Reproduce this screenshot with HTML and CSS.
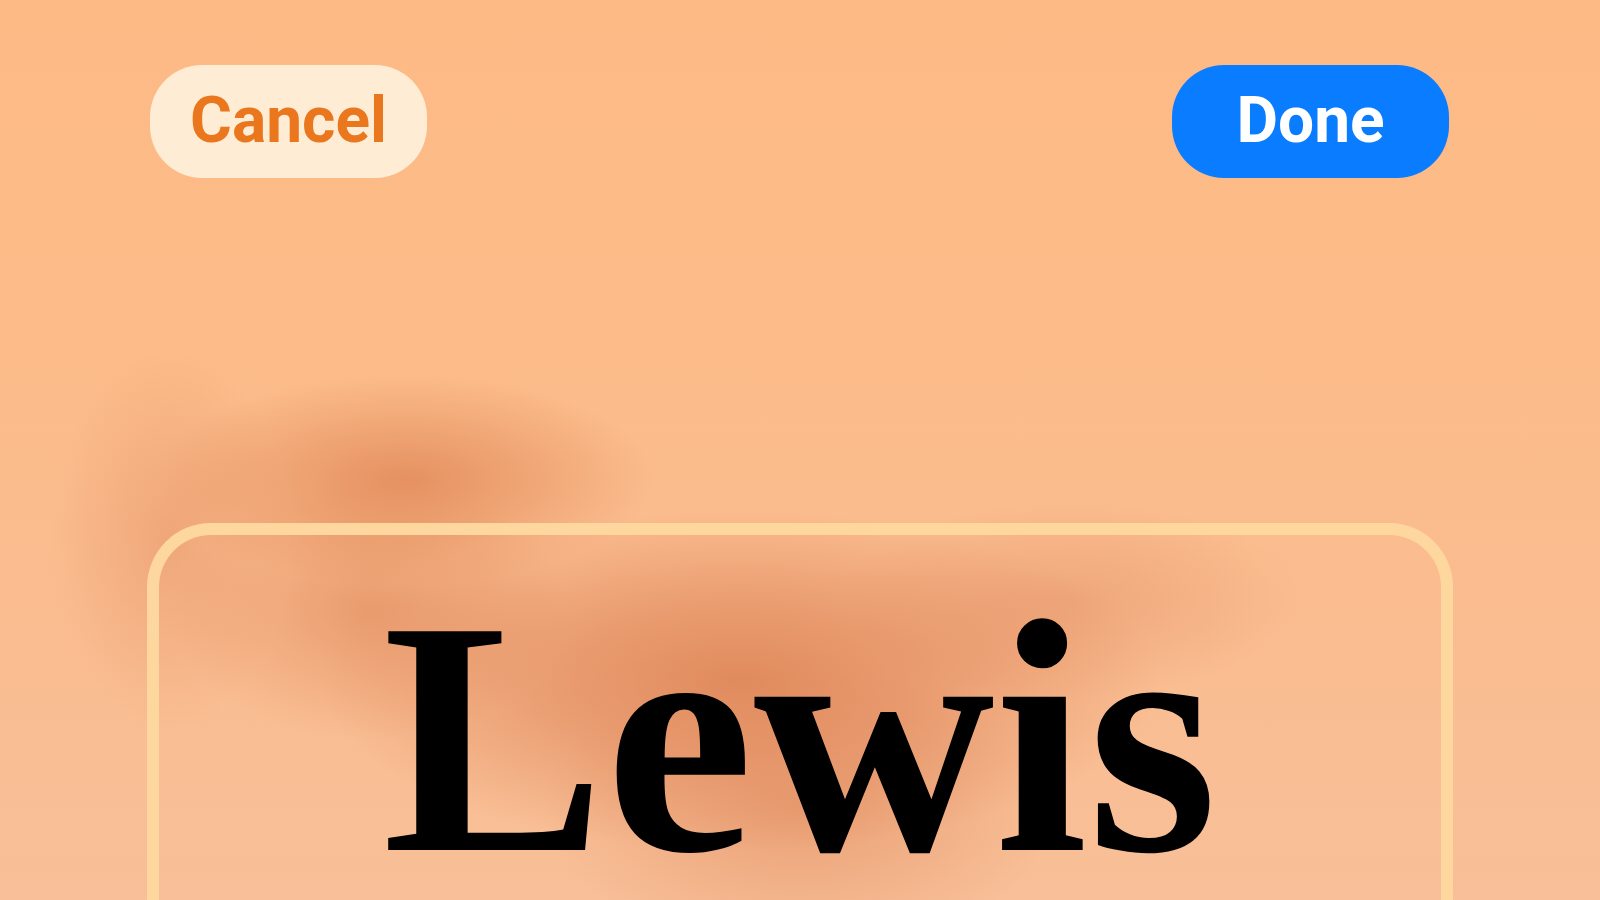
FILE: index.html
```html
<!DOCTYPE html>
<html lang="en">
<head>
<meta charset="utf-8">
<title>Edit Name</title>
<link rel="stylesheet" href="styles.css">
</head>
<body>
<div class="page">
  <header class="toolbar">
    <button class="btn btn-cancel" type="button">Cancel</button>
    <button class="btn btn-done" type="button">Done</button>
  </header>
  <section class="card">
    <div class="name">Lewis</div>
  </section>
</div>
</body>
</html>
```

FILE: styles.css
```css
html, body {
  margin: 0;
  padding: 0;
}

body {
  width: 1600px;
  height: 900px;
  overflow: hidden;
  background-color: #fbbb8b;
  background-image:
    radial-gradient(ellipse 250px 105px at 405px 480px, rgba(224, 134, 86, 0.8) 0%, rgba(224, 134, 86, 0.45) 45%, rgba(224, 134, 86, 0) 100%),
    radial-gradient(ellipse 120px 190px at 170px 540px, rgba(228, 145, 100, 0.5) 0%, rgba(228, 145, 100, 0) 100%),
    radial-gradient(ellipse 420px 170px at 740px 680px, rgba(220, 130, 85, 0.85) 0%, rgba(220, 130, 85, 0.55) 45%, rgba(220, 130, 85, 0) 100%),
    radial-gradient(ellipse 260px 140px at 800px 810px, rgba(222, 135, 90, 0.55) 0%, rgba(222, 135, 90, 0) 100%),
    radial-gradient(ellipse 230px 100px at 1070px 600px, rgba(228, 148, 105, 0.55) 0%, rgba(228, 148, 105, 0) 100%),
    radial-gradient(ellipse 200px 130px at 370px 610px, rgba(224, 138, 92, 0.65) 0%, rgba(224, 138, 92, 0) 100%),
    linear-gradient(to bottom, #fdba85 0%, #fcbb89 40%, #f8bf98 100%);
  font-family: Roboto, "Liberation Sans", sans-serif;
}

.page {
  box-sizing: border-box;
  height: 900px;
  padding: 65px 151px 0 147px;
  display: flex;
  flex-direction: column;
}

.toolbar {
  display: flex;
  justify-content: space-between;
  align-items: center;
  padding-left: 3px;
}

.btn {
  width: 277px;
  height: 113px;
  border: none;
  border-radius: 52px;
  font-family: Roboto, "Liberation Sans", sans-serif;
  font-weight: 700;
  font-size: 64px;
  letter-spacing: 0;
  line-height: 1;
  padding: 0 0 2px 0;
  cursor: pointer;
}

.btn-cancel {
  background: #feecd4;
  color: #ea771d;
}

.btn-done {
  background: #0a7cff;
  color: #ffffff;
}

.card {
  flex: 1;
  margin-top: 345px;
  margin-right: -4px;
  border: 12px solid #fed79e;
  border-bottom: 0;
  border-radius: 64px 64px 0 0;
  padding-top: 52px;
  text-align: center;
}

.name {
  font-family: "Liberation Serif", "Times New Roman", serif;
  font-weight: 700;
  font-size: 334px;
  line-height: 0.9;
  color: #000000;
}
```
